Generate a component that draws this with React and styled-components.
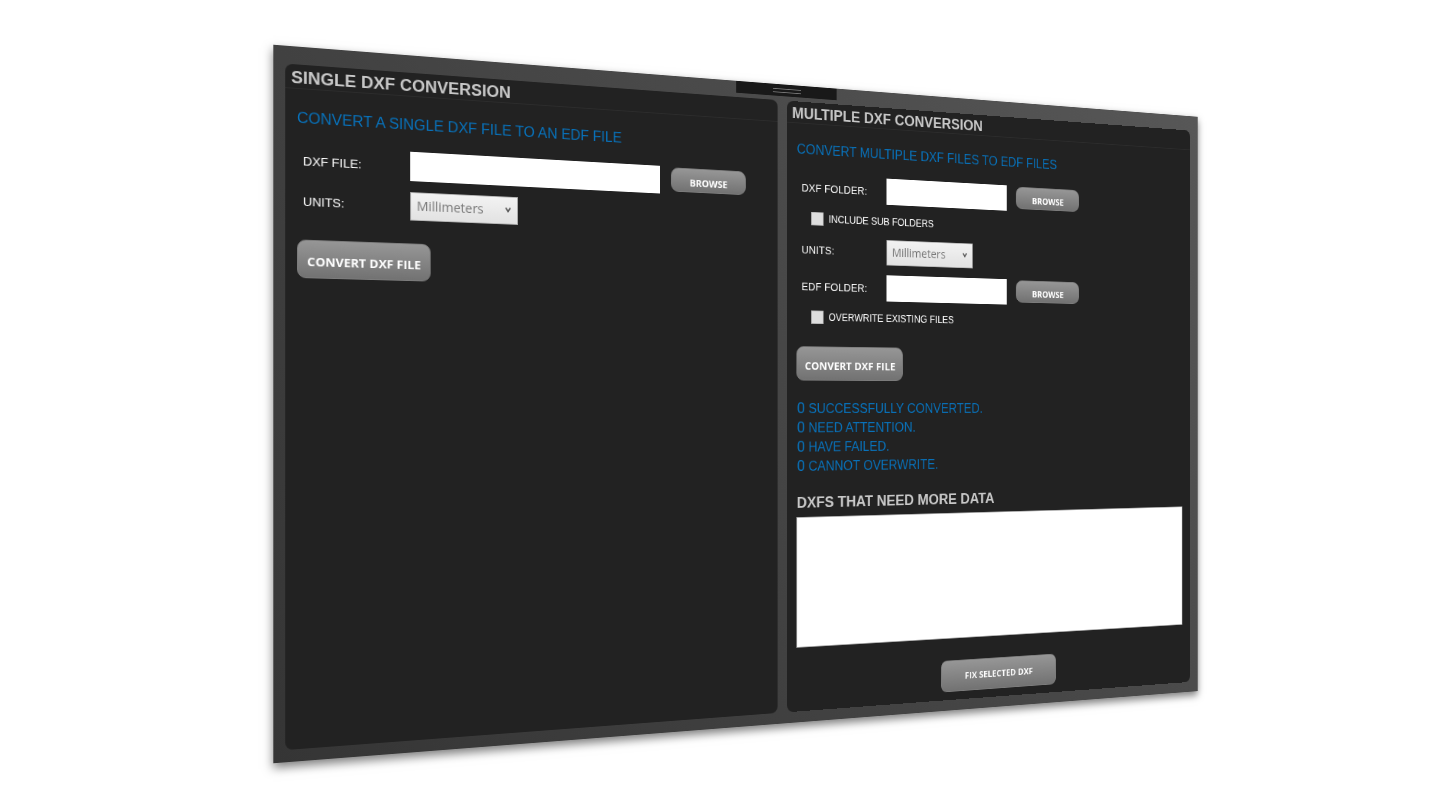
import React from "react";
import styled, { createGlobalStyle } from "styled-components";

const GlobalStyle = createGlobalStyle`
  *, *::before, *::after { box-sizing: border-box; }
  body {
    margin: 0;
    background: #fff;
    overflow: hidden;
    font-family: "Liberation Sans", Arial, sans-serif;
  }
`;

const Stage = styled.main`
  display: grid;
  place-items: center;
  min-height: 100vh;
  padding-left: 142px;
`;

/* The window stands in perspective, its left side nearer to the viewer. */
const Window = styled.div`
  display: flex;
  flex-direction: column;
  justify-self: center;
  width: 81.3vw;
  min-height: 94vh;
  padding: 0 12px 13px;
  background: linear-gradient(50deg, #353535, #575757);
  box-shadow: 0 5px 10px rgba(0, 0, 0, 0.5);
  transform: perspective(1571px) rotateY(21deg) scale(0.84);
`;

const Handle = styled.button`
  display: flex;
  flex-direction: column;
  align-items: center;
  justify-content: center;
  align-self: center;
  width: 128px;
  height: 14px;
  margin-bottom: 5px;
  padding: 0;
  border: 0;
  background: #191919;
`;

const Grip = styled.span`
  width: 36px;
  height: 5px;
  border: 1px solid #777;
  border-width: 1px 0;
`;

const Panels = styled.div`
  display: grid;
  flex: 1;
  grid-template-columns: 49fr 50fr;
  gap: 12px;
`;

const Panel = styled.section`
  display: flex;
  flex-direction: column;
  min-width: 0;
  border-radius: 8px;
  background: #222;
`;

const PanelTitle = styled.h1`
  height: 26px;
  margin: 0;
  padding: 3px 6px 0;
  border-bottom: 1px solid #2c2c2c;
  color: #c8c8c8;
  font-size: 18px;
  font-weight: 700;
  line-height: 22px;
`;

const PanelBody = styled.form`
  display: flex;
  flex: 1;
  flex-direction: column;
  align-items: flex-start;
  padding: 20px 12px 10px;
`;

const Intro = styled.h2`
  margin: 0 0 18px;
  color: #0872bb;
  font-size: 16px;
  font-weight: 400;
  line-height: 22px;
`;

const Field = styled.div`
  display: flex;
  align-items: center;
  height: 32px;
  margin-bottom: ${(p) => p.$after}px;
  padding-left: 6px;
`;

const Label = styled.label`
  width: 112px;
  padding-top: 2px;
  color: #fff;
  font-size: 13px;
  line-height: 16px;
`;

const TextBox = styled.input`
  width: ${(p) => p.$width}px;
  height: 32px;
  margin-right: 13px;
  padding: 0 8px;
  border: 1px solid #fff;
  background: #fff;
  color: #333;
  font-size: 14px;
`;

const Button = styled.button`
  width: ${(p) => p.$width}px;
  height: ${(p) => p.$height}px;
  padding: ${(p) => p.$drop}px 0 0;
  border: 1px solid #7c7c7c;
  border-radius: ${(p) => p.$radius}px;
  background: linear-gradient(#969696, #727272);
  color: #fff;
  font-family: "Open Sans", "Noto Sans", sans-serif;
  font-size: ${(p) => p.$size}px;
  font-weight: 700;
  line-height: 16px;
  text-align: center;
  white-space: nowrap;
`;

const Browse = styled(Button)`
  margin-bottom: 2px;
`;

const SelectFrame = styled.div`
  display: grid;
  align-items: center;
  width: 118px;
  height: 31px;

  > * { grid-area: 1 / 1; }
`;

const Select = styled.select`
  width: 100%;
  height: 100%;
  padding: 0 20px 2px 6px;
  border: 1px solid #b4b4b4;
  border-radius: 0;
  appearance: none;
  background: linear-gradient(#f2f2f2, #e2e2e2);
  color: #777;
  font-family: "Open Sans", "Noto Sans", sans-serif;
  font-size: 14px;
`;

const Chevron = styled.svg`
  justify-self: end;
  width: 8px;
  height: 8px;
  margin-right: 7px;
  pointer-events: none;
`;

const CheckLabel = styled.label`
  display: flex;
  align-items: center;
  gap: 6px;
  height: 16px;
  margin-bottom: ${(p) => p.$after}px;
  padding-left: 19px;
  color: #fff;
  font-size: 12px;
  line-height: 16px;
`;

const CheckBox = styled.input`
  width: 16px;
  height: 16px;
  margin: 0;
  appearance: none;
  border: 1px solid #b8b8b8;
  background: #dedede;

  &:checked { background: #0872bb; }
`;

const Results = styled.ul`
  margin: 21px 0 22px;
  padding: 0;
  color: #0872bb;
  font-size: 16px;
  line-height: 23px;
  list-style: none;
`;

const Result = styled.li`
  height: 23px;
`;

const Count = styled.span`
  font-family: Roboto, "Liberation Sans", sans-serif;
  font-size: 19px;
`;

const ListTitle = styled.label`
  margin-bottom: 6px;
  color: #c8c8c8;
  font-size: 18px;
  font-weight: 700;
  line-height: 22px;
`;

const FileList = styled.select`
  flex: 1;
  width: 100%;
  min-height: 120px;
  margin-bottom: 27px;
  border: 1px solid #aaa;
  border-radius: 0;
  background: #fff;
`;

const Footer = styled.div`
  align-self: center;
`;

function BrowseButton() {
  return (
    <Browse type="button" $width={92} $height={28} $radius={9} $size={11} $drop={5}>
      BROWSE
    </Browse>
  );
}

function ConvertButton() {
  return (
    <Button type="button" $width={140} $height={41} $radius={9} $size={13} $drop={4}>
      CONVERT DXF FILE
    </Button>
  );
}

function PathField({ id, label, width, after }) {
  return (
    <Field $after={after}>
      <Label htmlFor={id}>{label}</Label>
      <TextBox id={id} type="text" $width={width} />
      <BrowseButton />
    </Field>
  );
}

function UnitsField({ id, after }) {
  return (
    <Field $after={after}>
      <Label htmlFor={id}>UNITS:</Label>
      <SelectFrame>
        <Select id={id} defaultValue="mm">
          <option value="mm">Millimeters</option>
          <option value="in">Inches</option>
        </Select>
        <Chevron viewBox="0 0 8 8" aria-hidden="true">
          <path d="M1.5 1.5 L4 5.5 L6.5 1.5" fill="none" stroke="#555" strokeWidth="1.5" />
        </Chevron>
      </SelectFrame>
    </Field>
  );
}

function Check({ label, after }) {
  return (
    <CheckLabel $after={after}>
      <CheckBox type="checkbox" />
      {label}
    </CheckLabel>
  );
}

const results = [
  "SUCCESSFULLY CONVERTED.",
  "NEED ATTENTION.",
  "HAVE FAILED.",
  "CANNOT OVERWRITE.",
];

export default function App() {
  return (
    <>
      <GlobalStyle />
      <Stage>
        <Window>
          <Handle type="button" aria-label="Open drawer">
            <Grip />
          </Handle>
          <Panels>
            <Panel>
              <PanelTitle>SINGLE DXF CONVERSION</PanelTitle>
              <PanelBody>
                <Intro>CONVERT A SINGLE DXF FILE TO AN EDF FILE</Intro>
                <PathField id="dxf-file" label="DXF FILE:" width={283} after={11} />
                <UnitsField id="single-units" after={25} />
                <ConvertButton />
              </PanelBody>
            </Panel>
            <Panel>
              <PanelTitle>MULTIPLE DXF CONVERSION</PanelTitle>
              <PanelBody>
                <Intro>CONVERT MULTIPLE DXF FILES TO EDF FILES</Intro>
                <PathField id="dxf-folder" label="DXF FOLDER:" width={166} after={13} />
                <Check label="INCLUDE SUB FOLDERS" after={13} />
                <UnitsField id="multiple-units" after={12} />
                <PathField id="edf-folder" label="EDF FOLDER:" width={166} after={13} />
                <Check label="OVERWRITE EXISTING FILES" after={27} />
                <ConvertButton />
                <Results>
                  {results.map((text) => (
                    <Result key={text}>
                      <Count>0</Count> {text}
                    </Result>
                  ))}
                </Results>
                <ListTitle htmlFor="incomplete">DXFS THAT NEED MORE DATA</ListTitle>
                <FileList id="incomplete" multiple />
                <Footer>
                  <Button type="button" $width={163} $height={39} $radius={8} $size={11} $drop={2}>
                    FIX SELECTED DXF
                  </Button>
                </Footer>
              </PanelBody>
            </Panel>
          </Panels>
        </Window>
      </Stage>
    </>
  );
}
